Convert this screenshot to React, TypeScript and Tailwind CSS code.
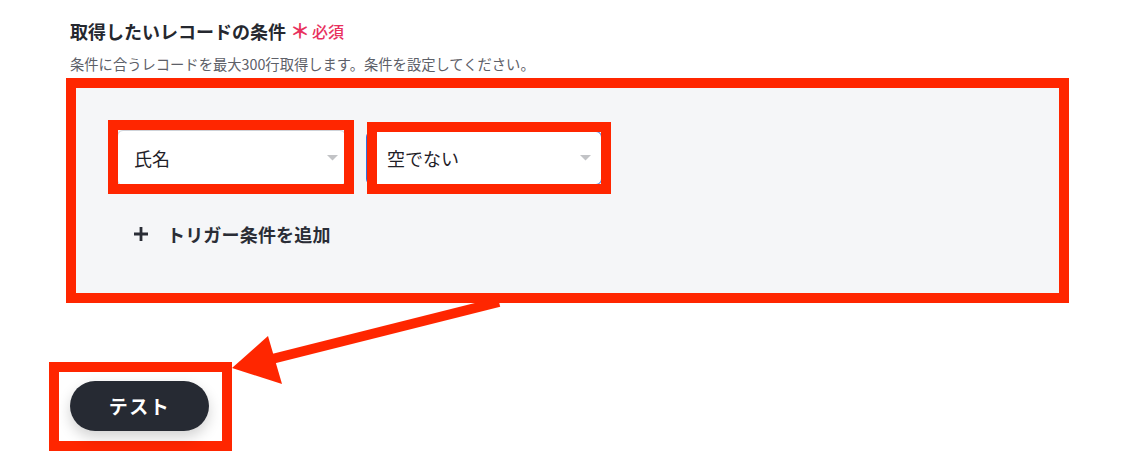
const RED = 'border-[#ff2600]'

function Caret() {
    return (
        <svg width="11" height="6" viewBox="0 0 11 6" className="shrink-0">
            <path d="M0 0 L11 0 L5.5 5.5 Z" fill="#c2c3c6" />
        </svg>
    )
}

function PlusIcon() {
    return (
        <svg width="16" height="16" viewBox="0 0 16 16" className="shrink-0">
            <path d="M8 1 V15 M1 8 H15" stroke="#2a2d36" strokeWidth="2.8" />
        </svg>
    )
}

export default function App() {
    return (
        <div
            className="relative w-[1128px] h-[468px] bg-white overflow-hidden pl-[49px]"
            style={{ fontFamily: '"Noto Sans CJK JP", "Noto Sans", sans-serif' }}
        >
            <div className="ml-[17px] w-[1003px]">
                <div className="pt-[18px] pl-[4px] flex items-center h-[43px]">
                    <span className="text-[18px] leading-[24px] font-bold text-[#25282f]">
                        取得したいレコードの条件
                    </span>
                    <span className="ml-[4px] text-[20px] leading-[24px] font-bold text-[#e8315e]">＊</span>
                    <span className="ml-[2px] text-[16px] leading-[24px] font-medium text-[#e8315e]">必須</span>
                </div>
                <p className="mt-[11px] pl-[4px] text-[14.3px] leading-[20px] text-[#5d6068]">
                    条件に合うレコードを最大300行取得します。条件を設定してください。
                </p>

                {/* condition panel */}
                <div className={`mt-[4px] h-[225px] border-[10px] ${RED} bg-[#f5f6f8] pl-[41px] pt-[42px]`}>
                    <div className="flex items-center gap-[20px]">
                        <div className="relative">
                            <div className="w-[229px] h-[56px] bg-white border border-[#cfd3d9] rounded-[6px] flex items-center justify-between pl-[16px] pr-[7px]">
                                <span className="text-[18px] text-[#1f2128]">氏名</span>
                                <Caret />
                            </div>
                            <div className={`absolute left-[-9px] top-[-10px] right-[-8px] bottom-[-8px] border-[10px] ${RED}`} />
                        </div>
                        <div className="relative">
                            <div className="w-[236px] h-[54px] bg-white border border-[#2f6fe0] rounded-[6px] flex items-center justify-between pl-[20px] pr-[10px]">
                                <span className="text-[18px] text-[#1f2128]">空でない</span>
                                <Caret />
                            </div>
                            <div className={`absolute left-[1px] top-[-9px] right-[-9px] bottom-[-9px] border-[10px] ${RED}`} />
                        </div>
                    </div>

                    <button className="mt-[36px] ml-[16px] flex items-center gap-[18px] text-[#2a2d36]">
                        <PlusIcon />
                        <span className="text-[18px] leading-[24px] font-bold tracking-[0.01em]">トリガー条件を追加</span>
                    </button>
                </div>
            </div>

            {/* test button */}
            <div className={`mt-[59px] w-[183px] h-[89px] border-[10px] ${RED} pl-[11px] pt-[9px]`}>
                <button className="w-[139px] h-[50px] rounded-full bg-[#262a33] text-white text-[19px] font-bold tracking-[0.08em] shadow-[0_6px_14px_rgba(0,0,0,0.18)]">
                    テスト
                </button>
            </div>

            {/* annotation arrow */}
            <svg className="absolute left-0 top-0 pointer-events-none" width="1128" height="468">
                <line x1="499" y1="302" x2="268" y2="360" stroke="#ff2600" strokeWidth="10" />
                <polygon points="232,368 268,336 282,384" fill="#ff2600" />
            </svg>
        </div>
    )
}
